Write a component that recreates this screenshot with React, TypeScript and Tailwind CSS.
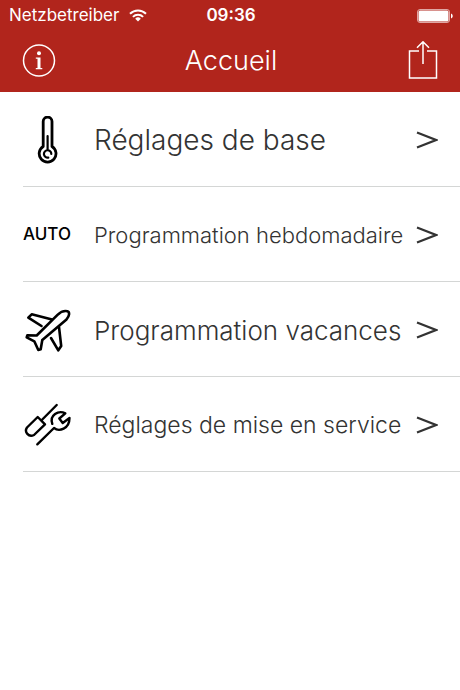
import type { ReactNode } from "react";

function ThermometerIcon() {
  return (
    <svg viewBox="0 0 48 48" className="size-12" fill="none" stroke="currentColor" strokeWidth="2.8" strokeLinecap="round" strokeLinejoin="round" aria-hidden="true">
      <path d="M20.2 30.5V5.500a4.400 4.400 0 0 1 8.800 0v25a8.400 8.400 0 1 1-8.800 0Z" />
      <path d="M24.600 20v14M28.300 38a3.700 3.700 0 1 0-3 3.600" strokeWidth="2.200" />
    </svg>
  );
}

function PlaneIcon() {
  return (
    <svg viewBox="0 0 48 48" className="size-12" fill="none" stroke="currentColor" strokeWidth="2.6" strokeLinecap="round" strokeLinejoin="round" aria-hidden="true">
      <path d="M13.7 29.5 34.5 8.8C38 5.4 42 4.6 44.5 5.2 47 6 46.5 10 43.5 13.5L19.3 34l-1.6 9.3-2.4.7-4-8.7-7.600-4 .600-2Z" />
      <path d="M29 13.500 8.700 8.300l-3.400 3.400L18.500 20" />
      <path d="m36 21 2.200 19-2.900 4.300L28 32" />
    </svg>
  );
}

function ToolsIcon() {
  return (
    <svg viewBox="0 0 48 48" className="size-12" fill="none" stroke="currentColor" strokeWidth="2.4" strokeLinecap="round" strokeLinejoin="round" aria-hidden="true">
      <path d="M33.700 4 18.800 19" />
      <path d="M14.700 16 4 26.500c-3 4.500 1.500 10 7 7.500L22 23.300Z" />
      <path d="M14.300 43.300 31 27c5 4 15.500 1 15.500-10l-6.800 5-3.400-4.500 6-5.200c-7-3.500-16 2-13 10.500" />
    </svg>
  );
}

type MenuItem = {
  label: string;
  size: string;
  icon: ReactNode;
};

const items: MenuItem[] = [
  { label: "Réglages de base", size: "text-[28px]", icon: <ThermometerIcon /> },
  {
    label: "Programmation hebdomadaire",
    size: "text-[22px]",
    icon: <span className="text-[17px] font-medium">AUTO</span>,
  },
  { label: "Programmation vacances", size: "text-[26px]", icon: <PlaneIcon /> },
  { label: "Réglages de mise en service", size: "text-[23px]", icon: <ToolsIcon /> },
];

function StatusBar() {
  return (
    <div className="grid grid-cols-3 items-center h-[30px] pt-px pl-[9px] pr-[7px] text-[17px]">
      <div className="flex items-center gap-[10px] whitespace-nowrap">
        <span>Netzbetreiber</span>
        <svg viewBox="0 0 18 13" className="w-[18px] h-[13px] shrink-0" fill="none" stroke="currentColor" strokeWidth="2" aria-hidden="true">
          <path d="M1 4.800a11.500 11.500 0 0 1 16 0M3.900 7.900a7.300 7.300 0 0 1 10.200 0" />
          <path d="M9 12.500 6.200 9.700a4 4 0 0 1 5.600 0Z" fill="currentColor" stroke="none" />
        </svg>
      </div>
      <span className="text-center font-semibold">09:36</span>
      <svg viewBox="0 0 36 14" className="w-9 h-[14px] justify-self-end" aria-hidden="true">
        <rect x=".5" y=".5" width="32" height="13" rx="2.500" fill="none" stroke="currentColor" strokeOpacity=".6" />
        <rect x="1.500" y="1.500" width="30" height="11" rx="1.500" fill="currentColor" />
        <path d="M34 4.500c2.300.8 2.300 4.200 0 5Z" fill="currentColor" />
      </svg>
    </div>
  );
}

export default function App() {
  return (
    <main className="min-h-screen bg-white font-[Inter,sans-serif] text-[#333]">
      <header className="bg-[#b1251c] text-white">
        <StatusBar />
        <div className="flex items-center justify-between h-[62px] pl-[22px] pr-5">
          <button type="button" aria-label="Informations">
            <svg viewBox="0 0 34 34" className="size-[34px]" fill="none" stroke="currentColor" strokeWidth="1.500" aria-hidden="true">
              <circle cx="17" cy="16.500" r="15.500" />
              <circle cx="17" cy="9.300" r="2" fill="currentColor" stroke="none" />
              <path d="M13.800 13.500H18.500V24H20.300V25.300H13.800V24H15.500V14.700H13.800Z" fill="currentColor" stroke="none" />
            </svg>
          </button>
          <h1 className="text-[27px] font-light">Accueil</h1>
          <button type="button" aria-label="Partager" className="flex justify-center w-[34px]">
            <svg viewBox="0 0 30 40" className="w-[30px] h-10" fill="none" stroke="currentColor" strokeWidth="1.500" aria-hidden="true">
              <path d="M11 10H1.500v27h27V10H19M15 23V0.800M9 6.800l6-6 6 6" />
            </svg>
          </button>
        </div>
      </header>

      <nav>
        <ul className="pl-[23px]">
          {items.map((item) => (
            <li key={item.label} className="border-b border-[#d4d6d5]">
              <a href="#" className="flex items-center h-[94px] pt-[2px] pr-[22px]">
                <span className="flex items-center justify-center w-12 mr-[23px] shrink-0 text-black">
                  {item.icon}
                </span>
                <span className={`${item.size} font-light grow whitespace-nowrap`}>{item.label}</span>
                <svg viewBox="0 0 22 20" className="w-[22px] h-5 shrink-0" fill="none" stroke="currentColor" strokeWidth="2.200" aria-hidden="true">
                  <path d="M1 2.500 20 10 1 17.500" />
                </svg>
              </a>
            </li>
          ))}
        </ul>
      </nav>
    </main>
  );
}
